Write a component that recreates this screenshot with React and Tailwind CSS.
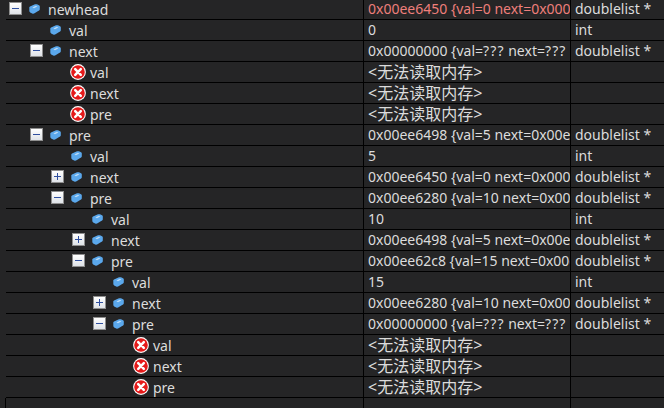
const rows = [
  { depth: 0, kind: "open", name: "newhead", value: "0x00ee6450 {val=0 next=0x00000000 {val=??? next=", type: "doublelist *", changed: true },
  { depth: 1, kind: "leaf", name: "val", value: "0", type: "int" },
  { depth: 1, kind: "open", name: "next", value: "0x00000000 {val=??? next=??? pre=???}", type: "doublelist *" },
  { depth: 2, kind: "error", name: "val", value: "<无法读取内存>" },
  { depth: 2, kind: "error", name: "next", value: "<无法读取内存>" },
  { depth: 2, kind: "error", name: "pre", value: "<无法读取内存>" },
  { depth: 1, kind: "open", name: "pre", value: "0x00ee6498 {val=5 next=0x00ee6450 {val=0 next=", type: "doublelist *" },
  { depth: 2, kind: "leaf", name: "val", value: "5", type: "int" },
  { depth: 2, kind: "closed", name: "next", value: "0x00ee6450 {val=0 next=0x00000000 {val=??? next=", type: "doublelist *" },
  { depth: 2, kind: "open", name: "pre", value: "0x00ee6280 {val=10 next=0x00ee6498 {val=5 next=", type: "doublelist *" },
  { depth: 3, kind: "leaf", name: "val", value: "10", type: "int" },
  { depth: 3, kind: "closed", name: "next", value: "0x00ee6498 {val=5 next=0x00ee6450 {val=0 next=", type: "doublelist *" },
  { depth: 3, kind: "open", name: "pre", value: "0x00ee62c8 {val=15 next=0x00ee6280 {val=10 next=", type: "doublelist *" },
  { depth: 4, kind: "leaf", name: "val", value: "15", type: "int" },
  { depth: 4, kind: "closed", name: "next", value: "0x00ee6280 {val=10 next=0x00ee62c8 {val=15 next=", type: "doublelist *" },
  { depth: 4, kind: "open", name: "pre", value: "0x00000000 {val=??? next=??? pre=???}", type: "doublelist *" },
  { depth: 5, kind: "error", name: "val", value: "<无法读取内存>" },
  { depth: 5, kind: "error", name: "next", value: "<无法读取内存>" },
  { depth: 5, kind: "error", name: "pre", value: "<无法读取内存>" },
];

const indent = ["pl-[3px]", "pl-[24px]", "pl-[45px]", "pl-[66px]", "pl-[87px]", "pl-[108px]"];

function Expander({ open }) {
  return (
    <span className="relative block w-[13px] h-[13px] shrink-0 border border-[#8f8f8f] bg-gradient-to-b from-[#ffffff] to-[#dfe3e8] -mt-px">
      <span className="absolute left-[2px] top-[5px] w-[7px] h-px bg-[#2f4f9f]" />
      {!open && <span className="absolute left-[5px] top-[2px] w-px h-[7px] bg-[#2f4f9f]" />}
    </span>
  );
}

function CubeIcon() {
  return (
    <svg width="11" height="10" viewBox="0 0 11 10" className="block shrink-0 -mt-px">
      <path d="M0.3 3.6 Q0.3 3 1 2.6 L6 0.3 Q7 0 8 0.3 L10 1.2 Q10.8 1.6 10.8 2.4 L10.8 5 Q10.8 6 10 6.6 L5.5 9.3 Q4.4 9.9 3.2 9.4 L1.2 8.4 Q0.3 7.9 0.3 6.8 Z" fill="#5ba8ec" />
      <path d="M3.4 3.4 L6.8 1.7 L8.4 2.5 L5 4.3 Z" fill="#bcdcf8" />
    </svg>
  );
}

function ErrorIcon() {
  return (
    <svg width="16" height="16" viewBox="0 0 16 16" className="block shrink-0">
      <circle cx="8" cy="8" r="7.9" fill="#ffffff" />
      <circle cx="8" cy="8" r="6.8" fill="#e51a1a" />
      <path d="M5.2 5.2 L10.8 10.8 M10.8 5.2 L5.2 10.8" stroke="#ffffff" strokeWidth="2.5" strokeLinecap="round" />
    </svg>
  );
}

function NameCell({ row }) {
  return (
    <div className={`flex items-center w-[358px] h-full shrink-0 border-r border-black ${indent[row.depth]}`}>
      {row.kind === "error" ? (
        <>
          <span className="ml-[19px]"><ErrorIcon /></span>
          <span className="ml-[4px]">{row.name}</span>
        </>
      ) : (
        <>
          {row.kind === "leaf" ? <span className="w-[13px] shrink-0" /> : <Expander open={row.kind === "open"} />}
          <span className="ml-[7px]"><CubeIcon /></span>
          <span className="ml-[8px]">{row.name}</span>
        </>
      )}
    </div>
  );
}

// the ??? runs are wider in the debugger font
function ValueText({ value }) {
  const parts = value.split("???");
  return parts.map((part, i) => (
    <span key={i}>
      {part}
      {i < parts.length - 1 && <span className="tracking-[1.1px]">???</span>}
    </span>
  ));
}

function Row({ row }) {
  const unreadable = row.kind === "error";
  return (
    <div className="flex items-center h-[21px] border-b border-black">
      <NameCell row={row} />
      <div className={`w-[207px] h-full shrink-0 border-r border-black pl-[4px] overflow-hidden whitespace-nowrap leading-[20px] ${row.changed ? "text-[#ee7f7b]" : ""} ${unreadable ? "text-[16px]" : ""}`}>
        <ValueText value={row.value} />
      </div>
      <div className="pl-[4px] whitespace-nowrap leading-[20px]">{row.type}</div>
    </div>
  );
}

export default function App() {
  return (
    <div className="w-[664px] h-[408px] overflow-hidden bg-[#252526] text-[#dcdcdc] text-[14px] font-['Noto_Sans','Noto_Sans_CJK_SC',sans-serif]">
      <div className="ml-[6px] -mt-px">
        {rows.map((row, i) => (
          <Row key={i} row={row} />
        ))}
      </div>
      <div className="ml-[5px] h-[11px] flex border-l border-black">
        <div className="w-[358px] border-r border-black" />
        <div className="w-[207px] border-r border-black" />
      </div>
    </div>
  );
}
